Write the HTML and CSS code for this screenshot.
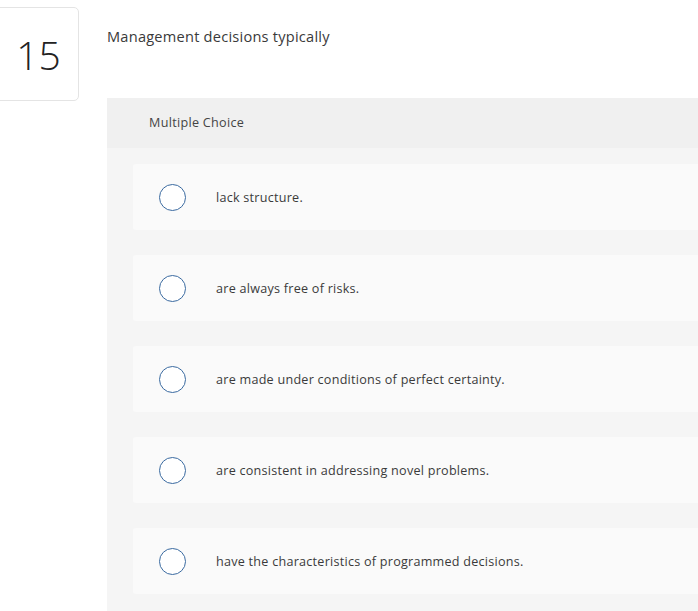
FILE: index.html
```html
<!DOCTYPE html>
<html>
<head>
<meta charset="utf-8">
<link rel="stylesheet" href="styles.css">
</head>
<body>
<div class="question">
  <div class="num-box"><span class="num">15</span></div>
  <div class="main">
    <div class="prompt">Management decisions typically</div>
    <div class="panel">
      <div class="panel-head">Multiple Choice</div>
      <div class="options">
        <div class="option"><span class="radio"></span><span class="label">lack structure.</span></div>
        <div class="option"><span class="radio"></span><span class="label">are always free of risks.</span></div>
        <div class="option"><span class="radio"></span><span class="label">are made under conditions of perfect certainty.</span></div>
        <div class="option"><span class="radio"></span><span class="label">are consistent in addressing novel problems.</span></div>
        <div class="option"><span class="radio"></span><span class="label">have the characteristics of programmed decisions.</span></div>
      </div>
    </div>
  </div>
</div>
</body>
</html>
```
FILE: styles.css
```css
html, body {
  margin: 0;
  padding: 0;
  background: #ffffff;
  overflow: hidden;
}
body {
  font-family: "Open Sans", "Lato", sans-serif;
  color: #333333;
  width: 698px;
  height: 611px;
}
.question {
  display: flex;
  align-items: flex-start;
}
.num-box {
  box-sizing: border-box;
  width: 84px;
  height: 94px;
  margin-left: -5px;
  margin-top: 7px;
  border: 1px solid #e4e4e4;
  border-radius: 5px;
  display: flex;
  align-items: center;
  justify-content: center;
  flex-shrink: 0;
}
.num {
  font-family: "Open Sans", sans-serif;
  font-weight: 300;
  font-size: 39px;
  color: #222222;
  padding-left: 3px;
}
.main {
  margin-left: 28px;
  flex: 1;
  min-width: 0;
}
.prompt {
  font-size: 14.6px;
  line-height: 20px;
  margin-top: 26px;
  letter-spacing: 0.23px;
  color: #3a3a3a;
}
.panel {
  margin-top: 52px;
  background: #f5f5f5;
  width: 620px;
  height: 520px;
}
.panel-head {
  background: #f0f0f0;
  height: 50px;
  box-sizing: border-box;
  padding-left: 42px;
  font-size: 12.6px;
  line-height: 50px;
  letter-spacing: 0.3px;
  color: #444444;
}
.options {
  padding: 16px 0 0 26px;
  display: flex;
  flex-direction: column;
  gap: 25px;
}
.option {
  background: #fafafa;
  height: 66px;
  border-radius: 3px 0 0 3px;
  display: flex;
  align-items: center;
}
.radio {
  box-sizing: border-box;
  width: 27px;
  height: 27px;
  border: 1.5px solid #3a6aa0;
  border-radius: 50%;
  background: #ffffff;
  margin-left: 26px;
  flex-shrink: 0;
}
.label {
  margin-left: 30px;
  font-size: 12.6px;
  letter-spacing: 0.25px;
  color: #3a3a3a;
}
```
